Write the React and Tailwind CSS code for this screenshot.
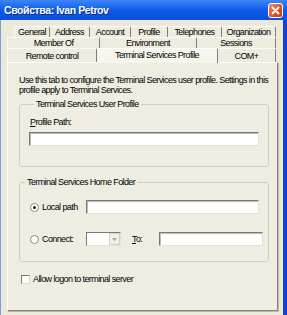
const row1 = [
  { label: "General", w: "w-[36px] border-l border-l-[#FBFAF5]" },
  { label: "Address", w: "w-[40px]" },
  { label: "Account", w: "w-[41px]" },
  { label: "Profile", w: "w-[37px]" },
  { label: "Telephones", w: "w-[54px]" },
  { label: "Organization", w: "w-[54px]" },
];

const row2 = [
  { label: "Member Of", w: "w-[93px] border-l border-l-[#FBFAF5]" },
  { label: "Environment", w: "w-[97px]" },
  { label: "Sessions", w: "w-[79px]" },
];

const tabBase =
  "flex h-full items-center justify-center rounded-t-[2px] border-r border-t border-r-[#7E7E76] border-t-[#FBFAF5] bg-[#EEECE1] whitespace-nowrap";

function Tab({ label, w }) {
  return <div className={`${tabBase} ${w}`}>{label}</div>;
}

function CloseButton() {
  return (
    <div className="flex h-[15px] w-[15px] items-center justify-center rounded-[3px] border border-white bg-linear-to-br from-[#F08A66] via-[#E0552C] to-[#C5391A]">
      <svg width="9" height="9" viewBox="0 0 9 9">
        <path d="M1.5 1.5 L7.5 7.5 M7.5 1.5 L1.5 7.5" stroke="white" strokeWidth="1.8" strokeLinecap="round" />
      </svg>
    </div>
  );
}

function Field({ className }) {
  return (
    <div
      className={`h-[14px] border border-b-[#E4E2D8] border-l-[#7A7A72] border-r-[#E4E2D8] border-t-[#7A7A72] bg-white shadow-[inset_1px_1px_0_#BDBBB2] ${className}`}
    />
  );
}

function Radio({ checked }) {
  return (
    <div className="flex h-[9px] w-[9px] items-center justify-center rounded-full border border-[#8A8A82] bg-white">
      {checked && <div className="h-[3px] w-[3px] rounded-full bg-[#1E1E1E]" />}
    </div>
  );
}

export default function App() {
  return (
    <div className="flex h-[315px] w-[287px] flex-col overflow-hidden bg-[#ECE9D8] font-['Liberation_Sans',Arial,sans-serif] text-[9px] leading-[10px] tracking-[-0.6px] text-black">
      <div className="flex h-[20px] shrink-0 items-center justify-between bg-linear-to-b from-[#3D86F7] via-[#0B5CE8] to-[#0A50D9] pl-[4px] pr-[4px]">
        <span className="text-[10.5px] font-bold tracking-[-0.4px] text-white [text-shadow:1px_1px_0_#0A2A8A]">
          Свойства: Ivan Petrov
        </span>
        <CloseButton />
      </div>

      <div className="flex flex-1">
        <div className="w-[1px] bg-[#7D9DE3]" />
        <div className="flex flex-1 flex-col pl-[6px] pr-[5px] pt-[6px]">
          <div className="ml-[7px] flex h-[11px]">
            {row1.map((t) => (
              <Tab key={t.label} {...t} />
            ))}
          </div>
          <div className="flex h-[11px]">
            {row2.map((t) => (
              <Tab key={t.label} {...t} />
            ))}
          </div>
          <div className="flex h-[14px] items-end">
            <div className={`${tabBase} w-[90px] border-l border-l-[#FBFAF5]`}>Remote control</div>
            <div className="relative z-10 -mb-[1px] flex h-[15px] w-[121px] items-center justify-center rounded-t-[2px] border-r border-t border-r-[#7E7E76] border-t-white bg-[#F6F5EE] pb-[3px] whitespace-nowrap">
              Terminal Services Profile
            </div>
            <div className={`${tabBase} w-[58px]`}>COM+</div>
          </div>

          <div className="flex h-[249px] flex-col border border-b-[#85857D] border-l-white border-r-[#85857D] border-t-white bg-[#EFEDE2] pl-[11px] pt-[12px] shadow-[1px_1px_0_#BAB7AA]">
            <p className="whitespace-nowrap">
              Use this tab to configure the Terminal Services user profile. Settings in this
              <br />
              profile apply to Terminal Services.
            </p>

            <fieldset className="mt-[4px] w-[250px] rounded-[3px] border border-[#D0CDBE] pb-[20px] pl-[9px] pt-[8px]">
              <legend className="ml-[5px] px-[2px]">Terminal Services User Profile</legend>
              <div className="pl-[1px]">
                <span className="underline">P</span>rofile Path:
              </div>
              <Field className="mt-[5px] w-[230px]" />
            </fieldset>

            <fieldset className="mt-[10px] w-[250px] rounded-[3px] border border-[#D0CDBE] pb-[15px] pt-[13px]">
              <legend className="ml-[5px] px-[2px]">Terminal Services Home Folder</legend>
              <div className="flex h-[14px] items-center">
                <div className="flex w-[66px] items-center gap-[3px] pl-[10px]">
                  <Radio checked />
                  <span>Local path</span>
                </div>
                <Field className="w-[173px]" />
              </div>
              <div className="mt-[18px] flex h-[14px] items-center">
                <div className="flex w-[66px] items-center gap-[3px] pl-[10px]">
                  <Radio />
                  <span>Connect:</span>
                </div>
                <div className="flex h-[14px] w-[35px] border border-b-[#E4E2D8] border-l-[#7A7A72] border-r-[#E4E2D8] border-t-[#7A7A72] bg-white">
                  <div className="flex-1" />
                  <div className="flex w-[11px] items-center justify-center border border-[#D6D3C6] bg-[#F1EFE6]">
                    <svg width="5" height="3" viewBox="0 0 5 3">
                      <path d="M0 0 H5 L2.5 3 Z" fill="#A9A89F" />
                    </svg>
                  </div>
                </div>
                <div className="ml-[11px] w-[27px]">
                  <span className="underline">T</span>o:
                </div>
                <Field className="w-[104px]" />
              </div>
            </fieldset>

            <div className="mt-[12px] flex h-[10px] items-center gap-[3px] pl-[2px]">
              <div className="h-[9px] w-[9px] border border-b-[#D8D6CB] border-l-[#7A7A72] border-r-[#D8D6CB] border-t-[#7A7A72] bg-white" />
              <span>Allow logon to terminal server</span>
            </div>
          </div>
        </div>
        <div className="w-[4px] bg-[#0F42D6]" />
      </div>
    </div>
  );
}
